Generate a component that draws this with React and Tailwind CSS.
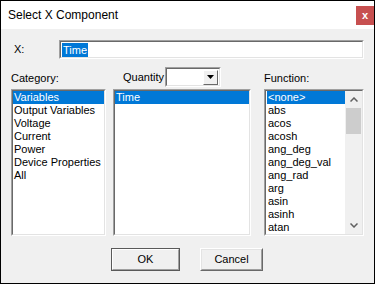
import React from "react";

const font = { fontFamily: '"Liberation Sans", Arial, sans-serif' };

function Sunken({ className = "", innerClass = "", children }) {
  return (
    <div className={`border border-t-[#a0a0a0] border-l-[#a0a0a0] border-r-white border-b-white ${className}`}>
      <div className={`h-full w-full border border-t-[#696969] border-l-[#696969] border-r-[#e3e3e3] border-b-[#e3e3e3] bg-white ${innerClass}`}>
        {children}
      </div>
    </div>
  );
}

function Item({ children, selected }) {
  return (
    <div
      className={`h-[13px] leading-[13px] pl-[1px] text-[11px] whitespace-nowrap ${
        selected ? "bg-[#0078d7] text-white" : "text-black"
      }`}
    >
      {children}
    </div>
  );
}

const categories = ["Variables", "Output Variables", "Voltage", "Current", "Power", "Device Properties", "All"];
const functions = ["<none>", "abs", "acos", "acosh", "ang_deg", "ang_deg_val", "ang_rad", "arg", "asin", "asinh", "atan"];

export default function App() {
  return (
    <div className="w-[375px] h-[284px] border border-black bg-[#f0f0f0] flex flex-col" style={font}>
      {/* Title bar */}
      <div className="h-[28px] bg-white flex items-start">
        <div className="pl-[7px] pt-[7px] text-[12px] leading-[15px] text-black">Select X Component</div>
        <div className="ml-auto mt-[5px] w-[18px] h-[19px] bg-[#c75050] flex items-center justify-center text-white text-[11px] font-bold leading-none">
          x
        </div>
      </div>

      {/* X row */}
      <div className="mt-[11px] h-[19px] flex items-center">
        <div className="w-[58px] pl-[13px] text-[11px] text-black">X:</div>
        <Sunken className="w-[305px] h-[19px]" innerClass="flex items-center pl-[1px]">
          <span className="bg-[#0078d7] text-white text-[11px] leading-[14px] px-[1px]">Time</span>
        </Sunken>
      </div>

      {/* Columns */}
      <div className="mt-[8px] flex pl-[10px]">
        {/* Category */}
        <div className="w-[95px] flex flex-col">
          <div className="h-[22px] flex items-center text-[11px] text-black">Category:</div>
          <Sunken className="h-[147px]" innerClass="overflow-hidden">
            {categories.map((c, i) => (
              <Item key={c} selected={i === 0}>{c}</Item>
            ))}
          </Sunken>
        </div>

        {/* Middle */}
        <div className="ml-[7px] w-[138px] flex flex-col">
          <div className="h-[22px] flex items-start">
            <div className="ml-[10px] h-[21px] flex items-center text-[11px] text-black">Quantity</div>
            <Sunken className="ml-[1px] mt-0 w-[56px] h-[20px]" innerClass="flex items-center justify-end pr-[1px]">
              <div className="w-[15px] h-[15px] border border-t-white border-l-white border-r-[#696969] border-b-[#696969] bg-[#f0f0f0] flex items-center justify-center">
                <svg width="7" height="4" viewBox="0 0 7 4">
                  <path d="M0 0H7L3.5 4Z" fill="#000" />
                </svg>
              </div>
            </Sunken>
          </div>
          <Sunken className="h-[147px]" innerClass="overflow-hidden">
            <Item selected>Time</Item>
          </Sunken>
        </div>

        {/* Function */}
        <div className="ml-[13px] w-[100px] flex flex-col">
          <div className="h-[22px] flex items-center text-[11px] text-black">Function:</div>
          <Sunken className="h-[147px]" innerClass="overflow-hidden flex">
            <div className="flex-1 overflow-hidden pl-[1px] min-w-0">
              {functions.map((f, i) => (
                <Item key={f} selected={i === 0}>{f}</Item>
              ))}
            </div>
            <div className="w-[17px] h-full bg-[#f0f0f0] flex flex-col">
              <div className="h-[17px] flex items-center justify-center">
                <svg width="8" height="5" viewBox="0 0 8 5">
                  <path d="M0.5 4.5L4 1L7.5 4.5" stroke="#606060" strokeWidth="1.5" fill="none" />
                </svg>
              </div>
              <div className="mx-[1px] h-[26px] bg-[#cdcdcd]" />
              <div className="flex-1" />
              <div className="h-[17px] flex items-center justify-center">
                <svg width="8" height="5" viewBox="0 0 8 5">
                  <path d="M0.5 0.5L4 4L7.5 0.5" stroke="#606060" strokeWidth="1.5" fill="none" />
                </svg>
              </div>
            </div>
          </Sunken>
        </div>
      </div>

      {/* Buttons */}
      <div className="mt-[12px] flex pl-[110px]">
        <div className="w-[69px] h-[23px] border border-[#5a5a5a]">
          <div className="h-full w-full border border-t-white border-l-white border-r-[#a0a0a0] border-b-[#a0a0a0] bg-[#f0f0f0] flex items-center justify-center text-[11px] text-black">
            OK
          </div>
        </div>
        <div className="ml-[20px] w-[63px] h-[23px] border border-t-white border-l-white border-r-[#696969] border-b-[#696969]">
          <div className="h-full w-full border border-t-[#e3e3e3] border-l-[#e3e3e3] border-r-[#a0a0a0] border-b-[#a0a0a0] bg-[#f0f0f0] flex items-center justify-center text-[11px] text-black">
            Cancel
          </div>
        </div>
      </div>
    </div>
  );
}
